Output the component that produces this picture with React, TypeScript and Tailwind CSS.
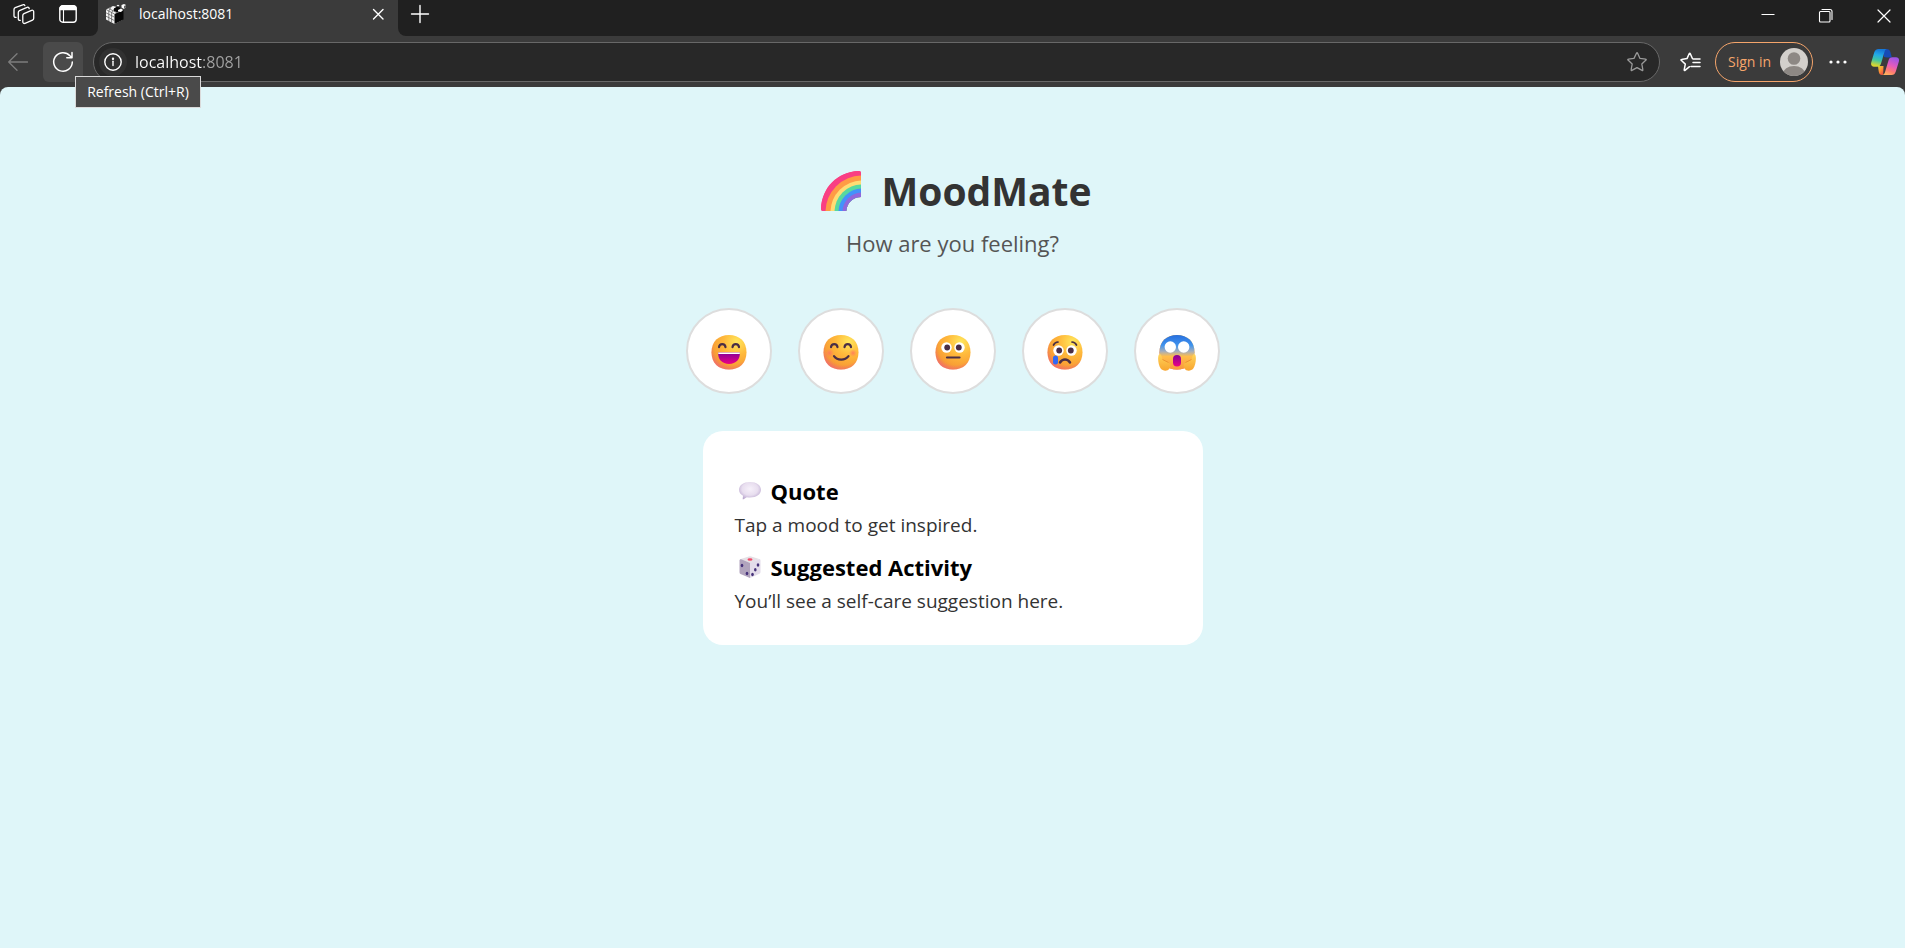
import React, { useState } from 'react';

const svgProps = { fill: 'none', stroke: 'currentColor', strokeLinecap: 'round', strokeLinejoin: 'round' } as const;

function WorkspacesIcon() {
  return (
    <svg width="22" height="21" viewBox="0 0 22 21" strokeWidth="1.3" {...svgProps}>
      <path d="M11 9.600 18.500 6.400a1.500 1.500 0 0 1 2.200 1.400v6.400a2 2 0 0 1-1.200 1.900L12 19.300a1.500 1.500 0 0 1-2.200-1.400v-6.400a2 2 0 0 1 1.200-1.900z" />
      <path d="M7.300 16.300a1.500 1.500 0 0 1-2-1.400V8.500a2 2 0 0 1 1.200-1.900L14 3.400a1.500 1.500 0 0 1 2.200 1.200" />
      <path d="M3 13.300a1.500 1.500 0 0 1-2-1.400V5.500a2 2 0 0 1 1.200-1.900L9.700.8a1.500 1.500 0 0 1 2.100.8" />
    </svg>
  );
}

function TabActionsIcon() {
  return (
    <svg width="18" height="18" viewBox="0 0 18 18" strokeWidth="1.4" {...svgProps}>
      <rect x="0.800" y="0.800" width="16.400" height="16.400" rx="3" />
      <path d="M1 3.500a2.500 2.500 0 0 1 2.500-2.500h11a2.500 2.500 0 0 1 2.500 2.500V4.500H1z" fill="currentColor" />
      <path d="M4.500 5v12" strokeWidth="1.1" />
    </svg>
  );
}

function CubeIcon() {
  return (
    <svg width="21" height="20" viewBox="0 0 21 20">
      <path d="M0 5.500 7 2l4 1 6 4v8.500L8.500 20 0 15.500z" fill="#f4f4f4" />
      <path d="M8.500 10 17.500 6v9.500L8.500 20z" fill="#080808" />
      <path d="M0 8.800l8.500 4.400M0 12.200l8.500 4.400M2.800 7v10M5.600 8.500v10M0 5.500 8.500 10M2.500 4.300l8.500 4.500M5 3 2.800 7M9 4 5.600 8.500" stroke="#555" strokeWidth="0.700" fill="none" />
      <path d="m8 4.500 3-2 3.500 1.500v3.500l-3 1L8 7z" fill="#080808" />
      <path d="m12 6 3-1.500 2 1.500-2 2-3-.5z" fill="#fff" />
      <path d="m15.500 1 2.500-1 2 1v2.500L18 5l-2.500-1.500z" fill="#fff" />
      <path d="M18 2 20 1v2.500L18 5z" fill="#666" />
      <path d="m10.500 1.500 1.500-.8 1.500.8-1.500.9z" fill="#fff" />
    </svg>
  );
}

function StarIcon({ list = false }: { list?: boolean }) {
  return list ? (
    <svg width="21" height="20" viewBox="0 0 21 20" strokeWidth="1.500" {...svgProps}>
      <path d="M9.500 14.700 5 18.300a.5.5 0 0 1-.8-.5l1.100-5.700L1.200 8.300a.5.5 0 0 1 .3-.9l5.500-.8L9.300 1.500a.5.5 0 0 1 .9 0l2.200 5M13 7h7M13 10.500h7M11 14.500h9" />
    </svg>
  ) : (
    <svg width="20" height="20" viewBox="0 0 20 20" strokeWidth="1.300" {...svgProps}>
      <path d="M9.600 1a.5.5 0 0 1 .9 0l2.500 5.400 5.700.7a.5.5 0 0 1 .3.900l-4.200 4 1.100 5.900a.5.5 0 0 1-.8.500L10 15.600l-5.100 2.800a.5.5 0 0 1-.8-.5L5.200 12 1 8a.5.5 0 0 1 .3-.9L7 6.400z" />
    </svg>
  );
}

function CopilotIcon() {
  return (
    <svg width="28" height="26" viewBox="0 0 28 26" aria-hidden="true">
      <defs>
        <linearGradient id="cpA" x1="0.600" y1="0" x2="0.400" y2="1">
          <stop offset="0.050" stopColor="#1679d8" /><stop offset="0.350" stopColor="#22a9e8" />
          <stop offset="0.650" stopColor="#42c6a0" /><stop offset="0.950" stopColor="#d6d532" />
        </linearGradient>
        <linearGradient id="cpB" x1="0.700" y1="0" x2="0.300" y2="1">
          <stop offset="0" stopColor="#9b55e8" /><stop offset="0.450" stopColor="#e45bbc" />
          <stop offset="0.750" stopColor="#ff7b73" /><stop offset="1" stopColor="#ffb35b" />
        </linearGradient>
        <linearGradient id="cpC" x1="0" y1="0" x2="0.600" y2="1">
          <stop offset="0" stopColor="#d6d532" /><stop offset="0.500" stopColor="#ff9b35" /><stop offset="1" stopColor="#f05040" />
        </linearGradient>
      </defs>
      <path d="M13 0h2.500c2.200 0 3.300 1 3.900 3l1.400 5.500h-5L13 8z" fill="#174bb5" />
      <path d="M7 17h5.500l-.3 8.500-1.200.5c-1.800 0-2.600-1-3.200-3z" fill="url(#cpC)" />
      <path d="M7.500 0H16c-1.600.2-2.200 1.600-2.700 3.400L10.200 14c-.8 2.800-2 3.700-4 3.700H3C.5 17.700-.4 15.800.3 13.300L3.200 3.500C4 1.200 5.300 0 7.500 0z" fill="url(#cpA)" />
      <path d="M21.500 8.300H25c2.500 0 3.500 1.900 2.800 4.400l-3 9.800C24 25 22.800 26 20.500 26h-9.600c1.900 0 2.700-1.400 3.300-3.400l3.300-11c.6-2.200 1.800-3.300 4-3.300z" fill="url(#cpB)" />
    </svg>
  );
}

type Mood = 'great' | 'good' | 'neutral' | 'sad' | 'scared';

const FACE = 'M17 0C27.500 0 34.500 6.500 34.500 17.300S27.500 34.600 17 34.600 -.5 28.100 -.5 17.300 6.500 0 17 0z';

function Face({ mood }: { mood: Mood }) {
  const dark = '#4a2e45';
  const line = { fill: 'none', stroke: dark, strokeWidth: 2.2, strokeLinecap: 'round' } as const;
  const base = `${mood}-base`;
  const rim = `${mood}-rim`;
  const happy = mood === 'great' || mood === 'good';
  return (
    <svg width="38" height="38" viewBox="-2 -1 38 38" aria-hidden="true">
      <defs>
        <radialGradient id={base} cx="0.720" cy="0.200" r="0.850">
          <stop offset="0" stopColor="#ffe75c" /><stop offset="0.450" stopColor="#ffb93b" /><stop offset="1" stopColor="#f59332" />
        </radialGradient>
        <radialGradient id={rim} cx="0.580" cy="0.360" r="0.700">
          <stop offset="0.720" stopColor="#f0607e" stopOpacity="0" /><stop offset="1" stopColor="#ef5a94" stopOpacity="0.750" />
        </radialGradient>
        <linearGradient id="scare-blue" x1="0" y1="0" x2="0" y2="1">
          <stop offset="0" stopColor="#276fdf" /><stop offset="0.300" stopColor="#4094ee" /><stop offset="0.480" stopColor="#a9afb8" /><stop offset="0.620" stopColor="#ffbd4a" /><stop offset="1" stopColor="#f9983c" />
        </linearGradient>
        <linearGradient id="mouth" x1="0" y1="0" x2="0" y2="1">
          <stop offset="0" stopColor="#850099" /><stop offset="1" stopColor="#ec0083" />
        </linearGradient>
        <radialGradient id="blush"><stop offset="0" stopColor="#ff6f61" stopOpacity="0.800" /><stop offset="1" stopColor="#ff7b60" stopOpacity="0" /></radialGradient>
        <linearGradient id="hand" x1="0" y1="0" x2="0" y2="1"><stop offset="0" stopColor="#ffd45a" /><stop offset="1" stopColor="#f8a530" /></linearGradient>
      </defs>
      <path d={FACE} fill={`url(#${base})`} />
      <path d={FACE} fill={`url(#${rim})`} />
      {happy && <path d="M7 12.200c.5-4.200 6-4.200 6.500 0M20.500 12.200c.5-4.200 6-4.200 6.500 0" {...line} />}
      {mood === 'great' && (
        <>
          <path d="M6.200 17.500h21.600C28.500 24 24 29 17 29S5.500 24 6.200 17.500z" fill="url(#mouth)" />
          <path d="M6.200 17.500h21.600v1.600H6.300z" fill="#fff" />
        </>
      )}
      {mood === 'good' && (
        <>
          <circle cx="5.500" cy="18" r="4.500" fill="url(#blush)" /><circle cx="29" cy="18" r="4" fill="url(#blush)" />
          <path d="M10 21.200c3.300 4.600 11 4.600 14.500 0" {...line} />
        </>
      )}
      {(mood === 'neutral' || mood === 'sad') && (
        <g transform={mood === 'sad' ? 'translate(0 3)' : undefined}>
          <circle cx="10.500" cy="12.500" r="5.200" fill="#fff" /><circle cx="23.500" cy="12.500" r="5.200" fill="#fff" />
          <circle cx="11.200" cy="12.500" r="2.900" fill={dark} /><circle cx="22.800" cy="12.500" r="2.900" fill={dark} />
        </g>
      )}
      {mood === 'neutral' && <path d="M11 22.500h12.500" {...line} />}
      {mood === 'sad' && (
        <>
          <path d="M5.500 10c1-2 2.300-2.800 4.500-3M28.500 10c-1-2-2.300-2.800-4.500-3" {...line} strokeWidth="1.700" />
          <path d="M12 27.500c2.500-4 7.500-4 10 0" {...line} strokeWidth="2.500" />
          <rect x="5" y="20.500" width="5" height="9" rx="2.500" fill="#2f68f5" />
        </>
      )}
      {mood === 'scared' && (
        <>
          <path d={FACE} fill="url(#scare-blue)" />
          <circle cx="10.300" cy="12" r="5.700" fill="#fff" /><circle cx="23.700" cy="12" r="5.700" fill="#fff" />
          <rect x="13" y="20" width="8" height="11.500" rx="4" fill="url(#mouth)" />
          <path d="M-1.500 20.500c.5-2 2.500-1.500 3 .5l1 3.500 6 3c2 1.200 2.300 4 1 6-2 3-6.500 2.800-8.800 0C-1.500 30-2.500 24-1.500 20.500z" fill="url(#hand)" />
          <path d="M35.500 20.500c-.5-2-2.500-1.500-3 .5l-1 3.500-6 3c-2 1.200-2.300 4-1 6 2 3 6.500 2.800 8.800 0 2.200-3.500 3.200-9.500 2.200-13z" fill="url(#hand)" />
          <path d="m2.500 24.500 6 3M31.500 24.500l-6 3" stroke="#e78a2b" strokeWidth="0.800" />
        </>
      )}
    </svg>
  );
}

const rainbowBands = [
  { r: 42, color: '#f93f83' },
  { r: 36.5, color: '#ff9b45' },
  { r: 31.5, color: '#ffdc74' },
  { r: 27.5, color: '#57d9a0' },
  { r: 23.5, color: '#4492fa' },
  { r: 19.5, color: '#9068dc' },
];

function Rainbow() {
  return (
    <svg width="40" height="40" viewBox="0 0 40 40" aria-hidden="true">
      <defs><clipPath id="bow"><path d="M2 40a2 2 0 0 1-2-2C1 16 16 1 38 0a2 2 0 0 1 2 2v24c-8 0-14 6-14.500 13a1 1 0 0 1-1 1z" /></clipPath></defs>
      <g clipPath="url(#bow)">
        <rect width="40" height="40" fill="#f93f83" />
        {rainbowBands.map((b) => <circle key={b.color} cx="41" cy="41" r={b.r} fill={b.color} />)}
      </g>
    </svg>
  );
}

function Bubble() {
  return (
    <svg width="22" height="18" viewBox="0 0 22 18" aria-hidden="true">
      <defs><radialGradient id="bub" cx="0.500" cy="0.400" r="0.600"><stop offset="0" stopColor="#f6f0fa" /><stop offset="0.600" stopColor="#e8deef" /><stop offset="1" stopColor="#bcaad0" /></radialGradient></defs>
      <path d="M11 0c6.500 0 11 3.300 11 7.800S17.500 15.500 11 15.500c-1.200 0-2.200-.1-3.200-.3L4.500 17.300c-.6.300-1 0-.8-.6l.3-2.900C1.500 12.500 0 10.300 0 7.800 0 3.300 4.500 0 11 0z" fill="url(#bub)" />
    </svg>
  );
}

function Dice() {
  return (
    <svg width="22" height="22" viewBox="0 0 22 22" aria-hidden="true">
      <path d="M9.800.4a3 3 0 0 1 2.400 0l8 2.600L11 7.500 1.800 3z" fill="#e5e0e5" />
      <path d="M.5 4 1.800 3 11 7v15l-1.200-.4L1.500 18A2 2 0 0 1 .5 16z" fill="#b1a4bd" />
      <path d="M20.200 3c1 .3 1.300.8 1.300 1.500V16a2 2 0 0 1-1 1.800l-8.300 3.800L11 22V7z" fill="#e3dcea" />
      <ellipse cx="11" cy="3.500" rx="2.500" ry="1.300" fill="#f14968" />
      <g fill="#46327a"><ellipse cx="3" cy="9.500" rx="1.300" ry="1.700" /><ellipse cx="8" cy="17.500" rx="1.300" ry="1.700" /><ellipse cx="19" cy="9" rx="1.300" ry="1.700" /><ellipse cx="16.300" cy="13.800" rx="1.300" ry="1.700" /><ellipse cx="13.500" cy="18.500" rx="1.300" ry="1.700" /></g>
    </svg>
  );
}

function TabStrip() {
  return (
    <div className="flex h-9 bg-[#3b3b3b] text-white">
      <div className="flex w-[98px] items-start gap-6 rounded-br-lg bg-[#202020] pl-[13px] pt-1">
        <button aria-label="Workspaces"><WorkspacesIcon /></button>
        <button aria-label="Tab actions" className="pt-px"><TabActionsIcon /></button>
      </div>
      <div className="flex h-7 w-[300px] items-center pl-2 pr-3">
        <CubeIcon />
        <span className="ml-3 flex-1 text-sm">localhost:8081</span>
        <button aria-label="Close tab">
          <svg width="16" height="16" viewBox="0 0 16 16" strokeWidth="1.400" {...svgProps}><path d="m3.500 3.500 9.500 9.500M13 3.500 3.500 13" /></svg>
        </button>
      </div>
      <div className="flex h-9 flex-1 items-start justify-between rounded-bl-lg bg-[#202020] pl-3 pr-3">
        <button aria-label="New tab" className="pt-1">
          <svg width="20" height="20" viewBox="0 0 20 20" strokeWidth="1.400" {...svgProps}><path d="M10 1.500v17M1.500 10h17" /></svg>
        </button>
        <div className="flex gap-10 pt-[7px]">
          <button aria-label="Minimize"><svg width="18" height="18" viewBox="0 0 18 18" stroke="currentColor"><path d="M2.500 7.500h13" /></svg></button>
          <button aria-label="Restore"><svg width="18" height="18" viewBox="0 0 18 18" strokeWidth="1.100" {...svgProps}><rect x="2.500" y="4.500" width="10.500" height="10.500" rx="1" /><path d="M5 2.500h8a2 2 0 0 1 2 2v8" /></svg></button>
          <button aria-label="Close window"><svg width="18" height="18" viewBox="0 0 18 18" strokeWidth="1.200" {...svgProps}><path d="m3 3 12 12M15 3 3 15" /></svg></button>
        </div>
      </div>
    </div>
  );
}

function Toolbar() {
  const [url, setUrl] = useState('localhost:8081');
  return (
    <div className="flex h-[51px] items-start bg-[#3b3b3b] px-[6px] pt-[6px]">
      <button aria-label="Back" className="ml-[2px] flex h-10 items-center text-[#7d7d7d]">
        <svg width="20" height="20" viewBox="0 0 20 20" strokeWidth="1.300" {...svgProps}><path d="M19.500 10H.7M9 1.700.7 10 9 18.300" /></svg>
      </button>
      <div className="relative ml-[15px]">
        <button aria-label="Refresh" className="flex h-10 w-10 items-center justify-center rounded-md bg-[#4a4a4a] text-white">
          <svg width="22" height="22" viewBox="0 0 22 22" strokeWidth="1.500" {...svgProps}><path d="M20.300 11A9.300 9.300 0 1 1 17.900 4.700L20 6.700M20 1.500v5.200h-5.200" /></svg>
        </button>
        <div role="tooltip" className="absolute left-8 top-[34px] z-10 flex h-8 w-[126px] items-center justify-center whitespace-nowrap border border-[#dadada] bg-[#4a4a4a] text-sm text-white">
          Refresh (Ctrl+R)
        </div>
      </div>
      <div className="ml-[10px] flex h-10 flex-1 items-center rounded-full border border-[#686868] bg-[#282828] pl-[5px] pr-3">
        <button aria-label="Site information" className="flex h-7 w-7 items-center justify-center rounded-full bg-[#313131] text-white">
          <svg width="18" height="18" viewBox="0 0 18 18" strokeWidth="1.400" {...svgProps}><circle cx="9" cy="9" r="8.200" /><path d="M9 8.200v4.300" /><circle cx="9" cy="5.700" r="0.500" fill="currentColor" /></svg>
        </button>
        <input
          aria-label="Address"
          value={url}
          onChange={(e) => setUrl(e.target.value)}
          className="ml-2 min-w-0 flex-1 bg-[linear-gradient(90deg,#fff_67px,#a3a3a3_67px)] bg-clip-text text-base text-transparent outline-none"
        />
        <button aria-label="Add to favorites" className="text-[#9a9a9a]"><StarIcon /></button>
      </div>
      <button aria-label="Favorites" className="ml-5 flex h-10 items-center text-white"><StarIcon list /></button>
      <button className="ml-[14px] flex h-10 w-[98px] items-center justify-between rounded-full border-[1px] border-[#f5a56b] pl-3 pr-1 text-sm text-[#f5a56b]">
        Sign in
        <svg width="28" height="28" viewBox="0 0 28 28" aria-hidden="true"><defs><clipPath id="av"><circle cx="14" cy="14" r="14" /></clipPath></defs><g clipPath="url(#av)"><rect width="28" height="28" fill="#d3d0cc" /><circle cx="14" cy="10.500" r="6.300" fill="#8d8884" /><ellipse cx="14" cy="26" rx="11" ry="8" fill="#8d8884" /></g></svg>
      </button>
      <button aria-label="Settings and more" className="ml-4 flex h-10 items-center text-white">
        <svg width="18" height="4" viewBox="0 0 18 4" fill="currentColor"><circle cx="2" cy="2" r="1.600" /><circle cx="9" cy="2" r="1.600" /><circle cx="16" cy="2" r="1.600" /></svg>
      </button>
      <button aria-label="Copilot" className="ml-6 flex h-10 items-center"><CopilotIcon /></button>
    </div>
  );
}

const moods: { id: Mood; label: string }[] = [
  { id: 'great', label: 'Great' },
  { id: 'good', label: 'Good' },
  { id: 'neutral', label: 'Neutral' },
  { id: 'sad', label: 'Sad' },
  { id: 'scared', label: 'Scared' },
];

function Section({ icon, title, children }: { icon: React.ReactNode; title: string; children: React.ReactNode }) {
  return (
    <section>
      <h2 className="flex h-8 items-center gap-[10px] pl-1 text-[22px] font-bold text-black">{icon}{title}</h2>
      <p className="mt-1 text-[19px] leading-7 text-[#333]">{children}</p>
    </section>
  );
}

export default function App() {
  return (
    <div className="flex min-h-screen flex-col bg-[#3b3b3b] font-['Open_Sans','Noto_Sans',sans-serif]">
      <TabStrip />
      <Toolbar />
      <main className="flex flex-1 flex-col items-center rounded-t-lg bg-[#dff6f9] pt-[76px]">
        <h1 className="flex h-14 items-center gap-5 pl-2 text-[39px] font-bold text-[#333]"><Rainbow />MoodMate</h1>
        <p className="mt-2 text-[22px] leading-8 text-[#555]">How are you feeling?</p>
        <div className="mt-[49px] flex gap-[26px]">
          {moods.map((m) => (
            <button key={m.id} aria-label={m.label} className="flex h-[86px] w-[86px] items-center justify-center rounded-full border-2 border-[#ddd] bg-white pt-1">
              <Face mood={m.id} />
            </button>
          ))}
        </div>
        <div className="mt-[37px] flex w-full max-w-[500px] flex-col gap-3 rounded-[20px] bg-white px-8 pb-[30px] pt-11">
          <Section icon={<Bubble />} title="Quote">Tap a mood to get inspired.</Section>
          <Section icon={<Dice />} title="Suggested Activity">You’ll see a self-care suggestion here.</Section>
        </div>
      </main>
    </div>
  );
}
